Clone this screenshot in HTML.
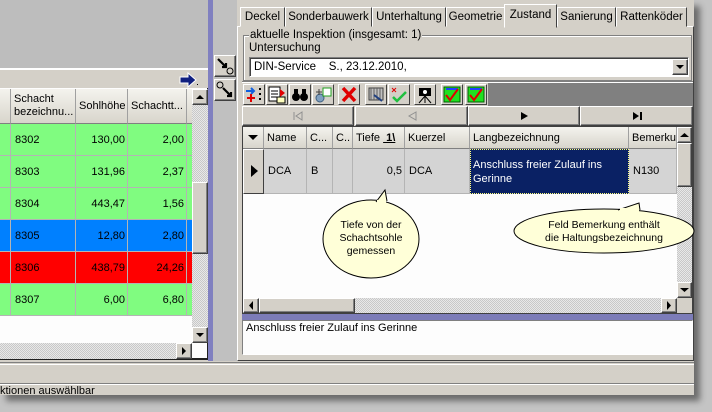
<!DOCTYPE html>
<html><head><meta charset="utf-8">
<style>
*{margin:0;padding:0;box-sizing:border-box}
body{width:712px;height:412px;overflow:hidden;background:#c4c4c4;font-family:"Liberation Sans",sans-serif;font-size:11px;color:#000;position:relative}
.a{position:absolute}
.win{left:0;top:0;width:694px;height:395px;background:#d4d0c8;box-shadow:6px 6px 6px rgba(0,0,0,.45)}
.btn{position:absolute;background:#d4d0c8;border:1px solid;border-color:#fff #404040 #404040 #fff;box-shadow:inset -1px -1px 0 #808080}
.hdr{position:absolute;background:linear-gradient(#f4f3ee,#d8d5cc);border-right:1px solid #a0a0a0;border-bottom:1px solid #808080;padding:0 3px;line-height:22px;white-space:nowrap;overflow:hidden}
.cell{position:absolute;border-right:1px solid #b4b4b4;border-bottom:1px solid #b4b4b4;padding:0 4px;white-space:nowrap}
.chk{background-color:#e8e8e8;background-image:linear-gradient(45deg,#c8c8c8 25%,transparent 25%,transparent 75%,#c8c8c8 75%),linear-gradient(45deg,#c8c8c8 25%,transparent 25%,transparent 75%,#c8c8c8 75%);background-size:2px 2px;background-position:0 0,1px 1px}
.tab{position:absolute;top:7px;height:20px;border:1px solid;border-color:#fff #404040 transparent #fff;background:#d4d0c8;line-height:18px;text-align:center;font-size:11.5px;white-space:nowrap}
.tb{position:absolute;top:84px;width:22px;height:21px;background:#d4d0c8;border:1px solid;border-color:#fff #404040 #404040 #fff}
</style></head><body>
<div class="a win"></div>

<!-- left panel -->
<div class="a" style="left:0;top:0;width:208px;height:68px;background:#bdbdbd"></div>
<div class="a" style="left:0;top:68px;width:208px;height:2px;background:#fff"></div>
<div class="a" style="left:0;top:70px;width:208px;height:19px;background:#d4d0c8"></div>
<svg class="a" style="left:178px;top:72px" width="22" height="16"><path d="M2 5h8V1l8 7-8 7v-4H2z" fill="#102080" stroke="#fff" stroke-width="1"/><rect x="19" y="12" width="1" height="1" fill="#000"/></svg>
<div class="a" style="left:0;top:88px;width:208px;height:272px;background:#fdfdfd;border-bottom:2px solid #202020;border-right:1px solid #202020"></div>
<div class="hdr" style="left:0;top:89px;width:11px;height:35px"></div>
<div class="hdr" style="left:11px;top:89px;width:65px;height:35px;line-height:13px;padding-top:4px">Schacht<br>bezeichnu...</div>
<div class="hdr" style="left:76px;top:89px;width:52px;height:35px;line-height:35px">Sohlhöhe</div>
<div class="hdr" style="left:128px;top:89px;width:59px;height:35px;line-height:35px">Schachtt...</div>
<div class="hdr" style="left:187px;top:89px;width:5px;height:35px"></div>
<div id="lrows"></div>
<div class="a chk" style="left:192px;top:89px;width:16px;height:254px"></div>
<div class="btn" style="left:192px;top:89px;width:16px;height:16px"><svg width="14" height="14"><path d="M3 9h8L7 5z"/></svg></div>
<div class="btn" style="left:192px;top:182px;width:16px;height:72px"></div>
<div class="btn" style="left:192px;top:327px;width:16px;height:16px"><svg width="14" height="14"><path d="M3 5h8L7 9z"/></svg></div>
<div class="a chk" style="left:0;top:343px;width:192px;height:16px"></div>
<div class="btn" style="left:176px;top:343px;width:16px;height:16px"><svg width="14" height="14"><path d="M5 3v8l4-4z"/></svg></div>
<div class="a" style="left:208px;top:0;width:5px;height:361px;background:#8080c0"></div>
<div class="a" style="left:213px;top:0;width:24px;height:361px;background:#c0c0c0"></div>
<div class="btn" style="left:214px;top:55px;width:22px;height:22px"><svg width="20" height="20"><path d="M3 3l8 8M7 11h4V7" stroke="#000" stroke-width="2.2" fill="none"/><circle cx="15" cy="15" r="3" fill="none" stroke="#000"/></svg></div>
<div class="btn" style="left:214px;top:79px;width:22px;height:22px"><svg width="20" height="20"><circle cx="5" cy="5" r="3" fill="none" stroke="#000"/><path d="M8 8l8 8M12 16h4v-4" stroke="#000" stroke-width="2.2" fill="none"/></svg></div>

<!-- right panel -->
<div class="a" style="left:237px;top:26px;width:457px;height:335px;border:1px solid;border-color:#fff #404040 #404040 #fff;background:#d4d0c8"></div>
<div class="tab" style="left:240px;width:45px">Deckel</div>
<div class="tab" style="left:285px;width:87px">Sonderbauwerk</div>
<div class="tab" style="left:372px;width:74px">Unterhaltung</div>
<div class="tab" style="left:446px;width:59px">Geometrie</div>
<div class="tab" style="left:504px;top:4px;width:53px;height:24px;z-index:2;line-height:20px">Zustand</div>
<div class="tab" style="left:557px;width:59px">Sanierung</div>
<div class="tab" style="left:616px;width:71px">Rattenköder</div>
<div class="a" style="left:243px;top:35px;width:449px;height:46px;border:1px solid #808080;box-shadow:1px 1px 0 #fff inset"></div>
<div class="a" style="left:249px;top:29px;background:#d4d0c8;padding:0 1px;font-size:11.5px">aktuelle Inspektion (insgesamt: 1)</div>
<div class="a" style="left:249px;top:42px;font-size:11.5px">Untersuchung</div>
<div class="a" style="left:249px;top:57px;width:440px;height:20px;background:#fff;border:1px solid;border-color:#808080 #fff #fff #808080;box-shadow:inset 1px 1px 0 #404040;font-size:11.5px;line-height:18px;padding-left:4px">DIN-Service&nbsp;&nbsp;&nbsp; S., 23.12.2010,</div>
<div class="btn" style="left:672px;top:59px;width:16px;height:16px"><svg width="14" height="14"><path d="M3 5h8L7 9z"/></svg></div>
<div class="a" style="left:242px;top:81px;width:451px;height:2px;border-top:1px solid #808080;border-bottom:1px solid #fff"></div>
<div class="a" style="left:242px;top:83px;width:451px;height:23px;background:#808080"></div>
<div class="a" style="left:242px;top:83px;width:246px;height:23px;background:#d4d0c8"></div>
<div class="tb" style="left:243px"><svg width="20" height="19"><path d="M2 6h8M7 3l3 3-3 3" stroke="#1060e0" stroke-width="2" fill="none"/><path d="M3 13h8M7 9v8" stroke="#e00000" stroke-width="2"/><path d="M16 3v2M16 8v2M16 13v2" stroke="#000" stroke-width="2"/></svg></div>
<div class="tb" style="left:266px"><svg width="20" height="19"><rect x="2" y="2" width="11" height="14" fill="#fff" stroke="#000"/><path d="M4 6h7M4 9h7M4 12h6" stroke="#000"/><path d="M13 4l5 4-5 4z" fill="#e00000"/><rect x="10" y="12" width="8" height="6" fill="#ffffc0" stroke="#000"/></svg></div>
<div class="tb" style="left:289px"><svg width="20" height="19"><circle cx="6" cy="12" r="4"/><circle cx="14" cy="12" r="4"/><rect x="4" y="4" width="4" height="6"/><rect x="12" y="4" width="4" height="6"/></svg></div>
<div class="tb" style="left:312px"><svg width="20" height="19"><circle cx="7" cy="13" r="4" fill="#80a0c0" stroke="#406080"/><rect x="10" y="3" width="8" height="8" fill="#fff" stroke="#20a020"/><path d="M3 7h6M6 4v6" stroke="#404040"/></svg></div>
<div class="tb" style="left:338px"><svg width="20" height="19"><path d="M4 3l12 13M16 3L4 16" stroke="#e00000" stroke-width="3.5"/></svg></div>
<div class="tb" style="left:365px"><svg width="20" height="19"><rect x="3" y="3" width="14" height="12" fill="#c0c0c0" stroke="#404040"/><path d="M5 3v12M8 3v12M11 3v12M14 3v12" stroke="#606060"/><path d="M8 10l8 6" stroke="#204080" stroke-width="2"/></svg></div>
<div class="tb" style="left:388px"><svg width="20" height="19"><path d="M3 3l4 4M7 3L3 7" stroke="#e00000"/><path d="M4 12l4 4 9-9" stroke="#20c040" stroke-width="2.5" fill="none"/></svg></div>
<div class="tb" style="left:414px"><svg width="20" height="19"><rect x="4" y="3" width="12" height="8"/><circle cx="10" cy="7" r="2" fill="#fff"/><path d="M10 11v7M10 11l-6 7M10 11l6 7" stroke="#000"/></svg></div>
<div class="tb" style="left:441px"><svg width="20" height="19"><rect x="2" y="2" width="16" height="15" fill="#20e020" stroke="#006000"/><path d="M4 4h12" stroke="#2040ff" stroke-width="2"/><path d="M4 10l4 5 8-11" stroke="#e00000" stroke-width="2" fill="none"/></svg></div>
<div class="tb" style="left:465px"><svg width="20" height="19"><rect x="2" y="2" width="16" height="15" fill="#20e020" stroke="#006000"/><path d="M4 4h12" stroke="#2040ff" stroke-width="2"/><path d="M4 10l4 5 8-11" stroke="#e00000" stroke-width="2" fill="none"/></svg></div>
<!-- nav -->
<div class="btn" style="left:242px;top:106px;width:112px;height:20px;text-align:center"><svg width="14" height="14" style="margin-top:2px"><path d="M3 3v8M11 3L5 7l6 4z" stroke="#909090" fill="none"/></svg></div>
<div class="btn" style="left:355px;top:106px;width:113px;height:20px;text-align:center"><svg width="14" height="14" style="margin-top:2px"><path d="M11 3L4 7l7 4z" stroke="#909090" fill="none"/></svg></div>
<div class="btn" style="left:468px;top:106px;width:112px;height:20px;text-align:center"><svg width="14" height="14" style="margin-top:2px"><path d="M4 3v8l7-4z"/></svg></div>
<div class="btn" style="left:580px;top:106px;width:113px;height:20px;text-align:center"><svg width="14" height="14" style="margin-top:2px"><path d="M3 3v8l6-4z M10 3h2v8h-2z"/></svg></div>
<!-- grid -->
<div class="a" style="left:242px;top:126px;width:451px;height:188px;background:#fdfdfd;border:1px solid #404040"></div>
<div class="hdr" style="left:243px;top:127px;width:21px;height:22px"><svg width="14" height="20"><path d="M2 8h10L7 13z"/></svg></div>
<div class="hdr" style="left:264px;top:127px;width:43px;height:22px">Name</div>
<div class="hdr" style="left:307px;top:127px;width:26px;height:22px">C...</div>
<div class="hdr" style="left:333px;top:127px;width:20px;height:22px">C..</div>
<div class="hdr" style="left:353px;top:127px;width:52px;height:22px">Tiefe <span style="text-decoration:underline;font-weight:bold">&nbsp;1\</span></div>
<div class="hdr" style="left:405px;top:127px;width:65px;height:22px">Kuerzel</div>
<div class="hdr" style="left:470px;top:127px;width:159px;height:22px">Langbezeichnung</div>
<div class="hdr" style="left:629px;top:127px;width:48px;height:22px">Bemerkung</div>
<div class="hdr" style="left:243px;top:149px;width:21px;height:45px;background:#d4d0c8;border:1px solid;border-color:#fff #404040 #404040 #fff"><svg width="14" height="43"><path d="M4 15v12l7-6z"/></svg></div>
<div class="a" style="left:264px;top:149px;width:413px;height:45px;background:#d4d4d4"></div>
<div class="cell" style="left:264px;top:149px;width:43px;height:45px;line-height:45px">DCA</div>
<div class="cell" style="left:307px;top:149px;width:26px;height:45px;line-height:45px">B</div>
<div class="cell" style="left:333px;top:149px;width:20px;height:45px"></div>
<div class="cell" style="left:353px;top:149px;width:52px;height:45px;line-height:45px;text-align:right;padding-right:2px">0,5</div>
<div class="cell" style="left:405px;top:149px;width:65px;height:45px;line-height:45px">DCA</div>
<div class="cell" style="left:470px;top:149px;width:159px;height:45px;background:#0a2164;color:#fff;border:1px dotted #ffff80;line-height:14px;padding:8px 2px;white-space:normal">Anschluss freier Zulauf ins Gerinne</div>
<div class="cell" style="left:629px;top:149px;width:48px;height:45px;line-height:45px">N130</div>
<div class="a chk" style="left:677px;top:127px;width:15px;height:170px"></div>
<div class="btn" style="left:677px;top:127px;width:15px;height:16px"><svg width="13" height="14"><path d="M2 9h9L6.5 5z"/></svg></div>
<div class="btn" style="left:677px;top:143px;width:15px;height:44px"></div>
<div class="btn" style="left:677px;top:282px;width:15px;height:16px"><svg width="13" height="14"><path d="M2 5h9L6.5 9z"/></svg></div>
<div class="a chk" style="left:243px;top:298px;width:434px;height:15px"></div>
<div class="btn" style="left:243px;top:298px;width:16px;height:15px"><svg width="14" height="13"><path d="M9 2v9L5 6.5z"/></svg></div>
<div class="btn" style="left:259px;top:298px;width:96px;height:15px"></div>
<div class="btn" style="left:661px;top:298px;width:16px;height:15px"><svg width="14" height="13"><path d="M5 2v9l4-4.5z"/></svg></div>
<div class="a" style="left:677px;top:298px;width:15px;height:15px;background:#d4d0c8"></div>
<div class="a" style="left:242px;top:314px;width:451px;height:6px;background:#7c7cb8"></div>
<div class="a" style="left:242px;top:320px;width:451px;height:35px;background:#fdfdfd;border:1px solid #808080;border-right-color:#fff;border-bottom-color:#fff;padding:1px 3px;font-size:11px">Anschluss freier Zulauf ins Gerinne</div>

<!-- callouts -->
<svg class="a" style="left:0;top:0" width="712" height="412">
<ellipse cx="371" cy="239" rx="48" ry="39" fill="#ffffd8" stroke="#000"/>
<path d="M376 202 L385 190 L387 201" fill="#ffffd8" stroke="#000"/>
<rect x="377" y="200" width="9" height="5" fill="#ffffd8"/>
<ellipse cx="604" cy="231" rx="90" ry="22" fill="#ffffd8" stroke="#000"/>
<path d="M618 210 L639 203 L640 210" fill="#ffffd8" stroke="#000"/>
<rect x="620" y="208" width="19" height="5" fill="#ffffd8"/>
<g font-family="Liberation Sans, sans-serif" font-size="10.5" text-anchor="middle">
<text x="371" y="228">Tiefe von der</text>
<text x="371" y="241">Schachtsohle</text>
<text x="371" y="254">gemessen</text>
<text x="604" y="228">Feld Bemerkung enthält</text>
<text x="604" y="241">die Haltungsbezeichnung</text>
</g>
</svg>

<!-- status -->
<div class="a" style="left:0;top:362px;width:694px;height:1px;background:#808080"></div>
<div class="a" style="left:0;top:364px;width:694px;height:1px;background:#fff"></div>
<div class="a" style="left:0;top:383px;width:694px;height:1px;background:#808080"></div>
<div class="a" style="left:0;top:384px;width:694px;height:1px;background:#fff"></div>
<div class="a" style="left:0;top:385px;font-size:11px">ktionen auswählbar</div>

<script>
var rows=[["8302","130,00","2,00","#80fc80"],["8303","131,96","2,37","#80fc80"],["8304","443,47","1,56","#80fc80"],["8305","12,80","2,80","#0080ff"],["8306","438,79","24,26","#ff0000"],["8307","6,00","6,80","#80fc80"]];
var h="";rows.forEach(function(r,i){var t=124+i*32;
h+='<div class="a" style="left:0;top:'+t+'px;width:192px;height:32px;background:'+r[3]+'"></div>';
h+='<div class="cell" style="left:0;top:'+t+'px;width:11px;height:32px"></div>';
h+='<div class="cell" style="left:11px;top:'+t+'px;width:65px;height:32px;line-height:32px">'+r[0]+'</div>';
h+='<div class="cell" style="left:76px;top:'+t+'px;width:52px;height:32px;line-height:32px;text-align:right;padding-right:2px">'+r[1]+'</div>';
h+='<div class="cell" style="left:128px;top:'+t+'px;width:59px;height:32px;line-height:32px;text-align:right;padding-right:2px">'+r[2]+'</div>';
h+='<div class="cell" style="left:187px;top:'+t+'px;width:5px;height:32px"></div>';});
document.getElementById("lrows").innerHTML=h;
</script>
</body></html>
